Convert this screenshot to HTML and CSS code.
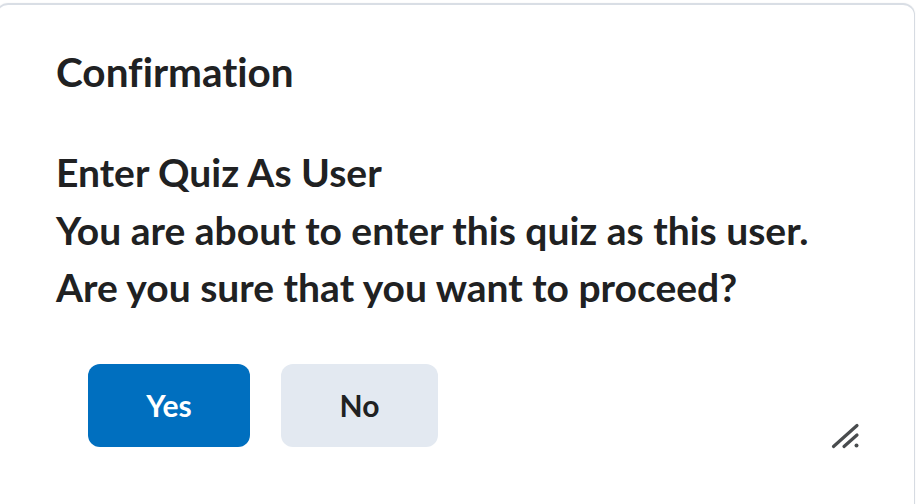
FILE: index.html
```html
<!DOCTYPE html>
<html lang="en">
<head>
<meta charset="utf-8">
<title>Confirmation</title>
<link rel="stylesheet" href="styles.css">
</head>
<body>
<div class="dialog">
  <h1 class="dialog-title">Confirmation</h1>
  <div class="dialog-body">
    <div class="msg-title">Enter Quiz As User</div>
    <div class="msg-line">You are about to enter this quiz as this user.</div>
    <div class="msg-line">Are you sure that you want to proceed?</div>
  </div>
  <div class="dialog-footer">
    <div class="buttons">
      <button class="btn btn-primary" type="button">Yes</button>
      <button class="btn btn-secondary" type="button">No</button>
    </div>
    <svg class="grip" width="30" height="26" viewBox="0 0 30 26" aria-hidden="true">
      <line x1="2.5" y1="23.5" x2="26" y2="2.5" stroke="#494c4e" stroke-width="3.2" stroke-linecap="round"/>
      <line x1="13" y1="23.5" x2="26" y2="12" stroke="#494c4e" stroke-width="3.2" stroke-linecap="round"/>
      <circle cx="25.5" cy="22.5" r="2" fill="#494c4e"/>
    </svg>
  </div>
</div>
</body>
</html>
```
FILE: styles.css
```css
html, body {
  margin: 0;
  padding: 0;
  background: #ffffff;
}
body {
  font-family: Lato, "Noto Sans", sans-serif;
  color: #202122;
  overflow: hidden;
  height: 504px;
  font-variant-ligatures: none;
}
.dialog {
  margin: 3px 0 0 -4px;
  width: 919px;
  height: 520px;
  border: 1px solid #d6dbe2;
  border-top: 2px solid #d9dee5;
  border-radius: 12px;
  box-shadow: 0 0 2px rgba(0,0,0,0.06);
  background: #fff;
  padding: 0 0 0 59px;
  box-sizing: border-box;
}
.dialog-title {
  margin: 0;
  padding-top: 44px;
  font-size: 40.5px;
  font-weight: 700;
  line-height: 46px;
}
.dialog-body {
  margin-top: 49px;
  font-size: 39px;
  font-weight: 700;
  line-height: 57.5px;
}
.dialog-footer {
  display: flex;
  align-items: flex-end;
  justify-content: space-between;
  margin-top: 47px;
  padding-right: 53px;
}
.buttons {
  display: flex;
  gap: 31px;
  padding-left: 32px;
}
.btn {
  font-family: Lato, "Noto Sans", sans-serif;
  font-weight: 700;
  font-size: 30px;
  height: 83px;
  border: none;
  border-radius: 12px;
  padding: 0;
  font-variant-ligatures: none;
}
.btn-primary {
  width: 162px;
  background: #006fbf;
  color: #ffffff;
}
.btn-secondary {
  width: 157px;
  background: #e3e9f1;
  color: #202122;
}
.grip {
  display: block;
  margin-bottom: -2px;
}
```
